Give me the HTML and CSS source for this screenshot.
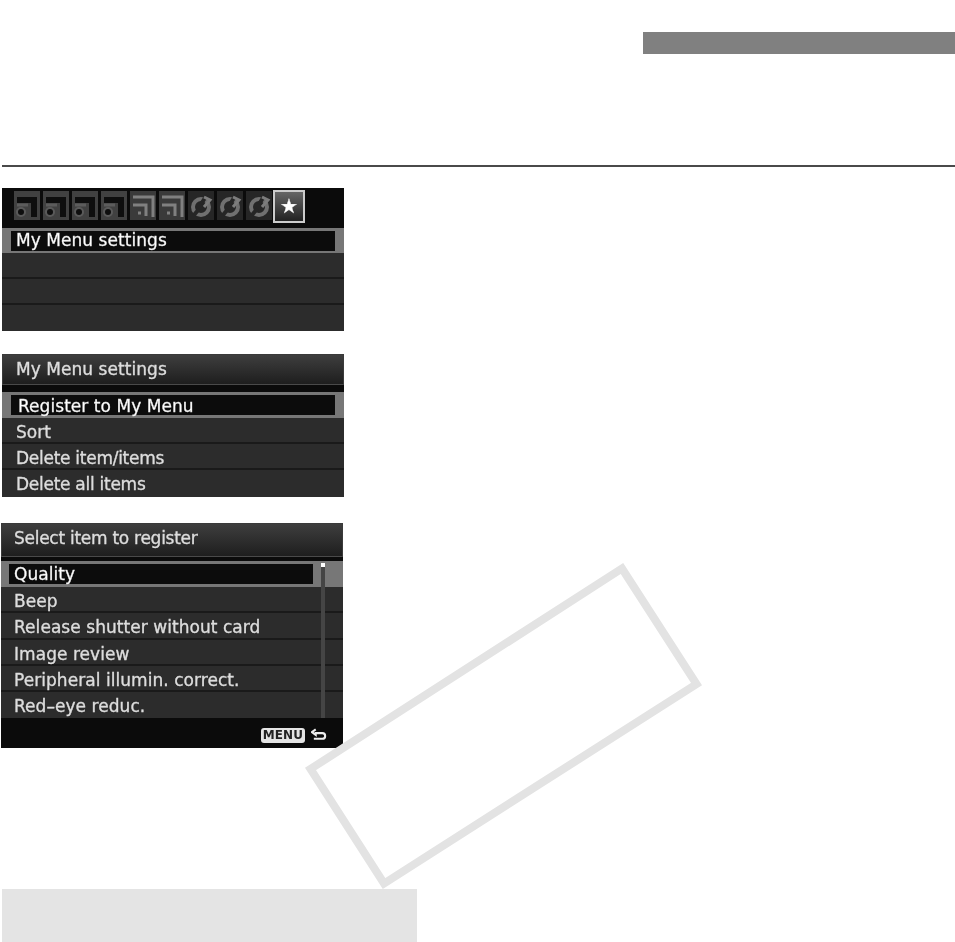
FILE: index.html
```html
<!DOCTYPE html>
<html lang="en">
<head>
    <meta charset="UTF-8">
    <meta name="viewport" content="width=device-width, initial-scale=1.0">
    <title>My Menu settings</title>

    <link rel="stylesheet" href="styles.css">
</head>
<body>
    <svg class="defs" width="0" height="0">
        <symbol id="ico-shoot" viewBox="0 0 28 32">
            <rect x="0" y="1" width="26" height="29" fill="#414141"/>
            <path d="M3 10h17v17" fill="none" stroke="#0e0e0e" stroke-width="6"/>
            <path d="M3 15h11" fill="none" stroke="#5c5c5c" stroke-width="3"/>
            <circle cx="7" cy="22" r="5" fill="#5a5a5a"/>
            <circle cx="7" cy="22" r="3" fill="#0e0e0e"/>
        </symbol>
        <symbol id="ico-play" viewBox="0 0 28 32">
            <rect x="0" y="1" width="26" height="29" fill="#3a3a3a"/>
            <path d="M3 7h20v20M3 15h13v11" fill="none" stroke="#808080" stroke-width="3"/>
            <path d="M8 23h3" fill="none" stroke="#808080" stroke-width="3"/>
        </symbol>
        <symbol id="ico-setup" viewBox="0 0 28 32">
            <rect x="0" y="1" width="26" height="29" fill="#262626"/>
            <circle cx="13" cy="17" r="8" fill="none" stroke="#707070" stroke-width="4"/>
            <path d="M19 5l-6 9M6 25l5-6" stroke="#262626" stroke-width="4"/>
            <path d="M16 7l6 3-6 7" fill="none" stroke="#7c7c7c" stroke-width="3"/>
        </symbol>
    </svg>

    <div class="page">
        <div class="section-tab"></div>
        <hr class="rule">

        <div class="screen screen-tabs">
            <div class="tabs">
                <svg class="tab"><use href="#ico-shoot"/></svg>
                <svg class="tab"><use href="#ico-shoot"/></svg>
                <svg class="tab"><use href="#ico-shoot"/></svg>
                <svg class="tab"><use href="#ico-shoot"/></svg>
                <svg class="tab"><use href="#ico-play"/></svg>
                <svg class="tab"><use href="#ico-play"/></svg>
                <svg class="tab"><use href="#ico-setup"/></svg>
                <svg class="tab"><use href="#ico-setup"/></svg>
                <svg class="tab"><use href="#ico-setup"/></svg>
                <div class="tab-active">★</div>
            </div>
            <div class="row selected"><span>My Menu settings</span></div>
            <div class="row"></div>
            <div class="row"></div>
            <div class="row last"></div>
        </div>

        <div class="screen screen-list">
            <div class="title">My Menu settings</div>
            <div class="row selected"><span>Register to My Menu</span></div>
            <div class="row">Sort</div>
            <div class="row tight">Delete item/items</div>
            <div class="row tight last">Delete all items</div>
        </div>

        <div class="screen screen-long">
            <div class="title tight">Select item to register</div>
            <div class="rows">
                <div class="row selected"><span>Quality</span></div>
                <div class="row">Beep</div>
                <div class="row">Release shutter without card</div>
                <div class="row">Image review</div>
                <div class="row">Peripheral illumin. correct.</div>
                <div class="row last">Red–eye reduc.</div>
                <div class="scrollbar"></div>
            </div>
            <div class="footer">
                <span class="menu-key">MENU</span>
                <svg class="back" viewBox="0 0 18 14">
                    <path d="M5 1L1 4l4 3V5h7q3 0 3 3t-3 3H3" fill="none" stroke="#eee" stroke-width="2.2"/>
                </svg>
            </div>
        </div>

        <div class="note"></div>

        <svg class="stamp" viewBox="0 0 955 942">
            <polygon points="622,568.5 696.5,684 384,883.5 310.5,769"/>
        </svg>
    </div>
</body>
</html>
```

FILE: styles.css
```css
body {
    margin: 0;
    background: #fff;
    font-family: "DejaVu Sans", sans-serif;
}
.defs {
    display: block;
    height: 0;
}
.page {
    position: relative;
    width: 955px;
    height: 942px;
    overflow: hidden;
}
.section-tab {
    height: 22px;
    margin: 32px 0 0 643px;
    background: #808080;
}
.rule {
    height: 2px;
    margin: 111px 0 0 2px;
    border: 0;
    background: #4a4a4a;
}
.screen {
    width: 342px;
    margin-left: 2px;
    background: #0b0b0b;
    color: #ddd;
    font-size: 17px;
    letter-spacing: .05px;
    -webkit-text-stroke: .35px #ddd;
    filter: blur(.7px);
    overflow: hidden;
}
.screen-tabs {
    height: 143px;
    margin-top: 21px;
}
.screen-list {
    height: 143px;
    margin-top: 23px;
}
.screen-long {
    height: 225px;
    margin: 26px 0 0 1px;
}
.tabs {
    display: flex;
    align-items: flex-start;
    height: 38px;
    padding: 2px 0 0 12px;
}
.tab {
    width: 28px;
    height: 32px;
    margin-right: 1px;
    flex: none;
}
.tab-active {
    width: 28px;
    height: 29px;
    margin-left: -2px;
    border: 2px solid #ccc;
    background: linear-gradient(#666, #222);
    color: #fff;
    font-size: 20px;
    line-height: 29px;
    text-align: center;
}
.title {
    height: 29px;
    margin-bottom: 7px;
    padding-left: 13px;
    border: 1px solid #3a3a3a;
    border-bottom-color: #4a4a4a;
    background: linear-gradient(#3e3e3e, #1e1e1e);
    line-height: 29px;
}
.tight {
    letter-spacing: -.27px;
}
.row {
    height: 24px;
    padding-left: 14px;
    border-bottom: 2px solid #1a1a1a;
    background: #2c2c2c;
    line-height: 29px;
    white-space: nowrap;
}
.row.last {
    height: 27px;
    border-bottom: 0;
}
.row.selected {
    height: 26px;
    padding: 0 9px;
    border-bottom: 0;
    background: #777;
    color: #fff;
}
.screen-tabs .row.selected {
    height: 25px;
}
.row.selected span {
    display: block;
    height: 20px;
    padding-left: 5px;
    position: relative;
    top: 3px;
    background: #0c0c0c;
    line-height: 20px;
}
.screen-tabs .row.selected span {
    line-height: 19px;
}
.screen-list .row.selected span {
    padding-left: 7px;
    line-height: 22px;
}
.screen-long .title {
    height: 32px;
    margin-bottom: 4px;
    padding-left: 12px;
}
.screen-long .rows {
    position: relative;
}
.screen-long .row {
    padding-left: 13px;
    line-height: 28px;
}
.screen-long .row:nth-child(3) {
    height: 25px;
}
.screen-long .row.selected {
    padding: 0 30px 0 8px;
}
.screen-long .row.selected span {
    padding-left: 5px;
}
.screen-long .row.last {
    height: 26px;
}
.scrollbar {
    position: absolute;
    top: 2px;
    left: 320px;
    width: 4px;
    height: 151px;
    background: #454545;
    border-top: 4px solid #fff;
}
.footer {
    display: flex;
    justify-content: flex-end;
    align-items: center;
    gap: 6px;
    height: 26px;
    padding: 4px 15px 0 0;
}
.menu-key {
    padding: 0 2px;
    border-radius: 3px;
    background: #e4e4e4;
    color: #222;
    -webkit-text-stroke: 0;
    font-size: 12px;
    font-weight: bold;
    line-height: 15px;
}
.back {
    width: 17px;
    height: 14px;
}
.note {
    width: 415px;
    height: 53px;
    margin: 141px 0 0 2px;
    background: #e4e4e4;
}
.stamp {
    position: absolute;
    top: 0;
    left: 0;
    width: 955px;
    height: 942px;
    pointer-events: none;
}
.stamp polygon {
    fill: none;
    stroke: #e3e3e3;
    stroke-width: 8;
}
```
